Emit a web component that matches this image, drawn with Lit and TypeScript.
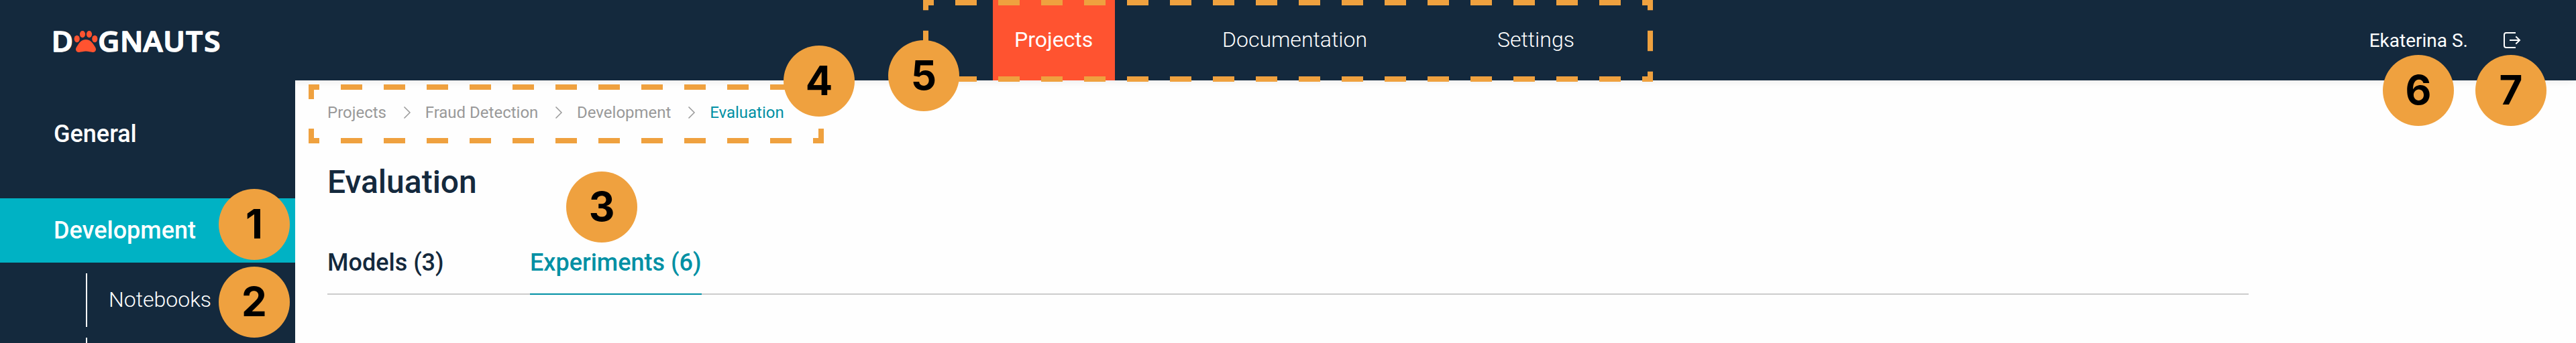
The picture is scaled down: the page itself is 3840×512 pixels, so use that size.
import { LitElement, html, css, svg } from "lit";
import { customElement, property } from "lit/decorators.js";

@customElement("dash-frame")
class DashFrame extends LitElement {
  @property({ type: Number }) w = 0;
  @property({ type: Number }) h = 0;
  @property({ type: Number }) vdash = 32;

  static styles = css`
    :host { display: block; }
    svg { display: block; }
  `;

  render() {
    const { w, h, vdash } = this;
    const side = (x1: number, y1: number, x2: number, y2: number, dash: number) => svg`
      <line x1=${x1} y1=${y1} x2=${x2} y2=${y2} stroke="#efa13f" stroke-width="8"
        stroke-dasharray="${dash} ${dash}" stroke-dashoffset=${dash / 2} />`;
    return html`<svg width=${w} height=${h} viewBox="0 0 ${w} ${h}">
      ${side(0, 4, w, 4, 32)} ${side(0, h - 4, w, h - 4, 32)}
      ${side(4, 0, 4, h, vdash)} ${side(w - 4, 0, w - 4, h, vdash)}
    </svg>`;
  }
}

@customElement("brand-logo")
class BrandLogo extends LitElement {
  static styles = css`
    :host { display: block; }
    svg { display: block; overflow: visible; }
    .word {
      font: 600 41.8px "Open Sans", "Noto Sans", sans-serif;
      fill: #fff;
      stroke: #fff;
      stroke-width: 1.6px;
      stroke-linejoin: round;
    }
    .paw { fill: #ff5330; }
  `;

  render() {
    return html`<svg width="250" height="32" viewBox="0 0 250 32">
      <text class="word" transform="scale(1.05 1)" x="-3.1 63.2 94.4 127.2 155.4 187.8 213.6" y="31">DGNAUTS</text>
      <g class="paw">
        <ellipse cx="34.7" cy="12" rx="4.1" ry="5.3" />
        <ellipse cx="43" cy="5.1" rx="4.1" ry="5.1" />
        <ellipse cx="53" cy="5.1" rx="4.1" ry="5.1" />
        <ellipse cx="61.3" cy="12" rx="4.1" ry="5.3" />
        <path d="M48 13C54 13 57.2 17 59.8 21C61.3 23.3 63.2 25.6 63 28C62.7 31.1 60.4 32.2 58 32C55 31.8 52 30.6 48 30.6C44 30.6 41 31.8 38 32C35.6 32.2 33.3 31.1 33 28C32.8 25.6 34.7 23.3 36.2 21C38.8 17 42 13 48 13Z" />
      </g>
    </svg>`;
  }
}

@customElement("app-root")
class AppRoot extends LitElement {
  static styles = css`
    :host {
      display: block;
      position: relative;
      width: 3840px;
      height: 512px;
      overflow: hidden;
      background: #fefefe;
      color: #14293d;
      font-family: Roboto, sans-serif;
    }
    * { box-sizing: border-box; }
    header {
      display: flex;
      align-items: center;
      position: relative;
      height: 120px;
      background: #14293d;
      color: #fff;
      box-shadow: 0 0 12px rgba(0, 0, 0, 0.1);
    }
    .brand { width: 1480px; padding: 4px 0 0 80px; }
    nav { display: flex; gap: 128px; height: 120px; flex: 1; }
    .link {
      padding: 0 32px;
      font-size: 32px;
      font-weight: 300;
      line-height: 118px;
      white-space: nowrap;
    }
    .link.on { min-width: 182px; background: #ff5330; font-weight: 400; }
    .link.wide { min-width: 282px; }
    .user { display: flex; align-items: center; gap: 49px; padding-right: 80px; font-size: 28px; }
    .user svg { display: block; }
    .body { display: flex; height: 392px; }
    aside {
      position: relative;
      width: 440px;
      flex: none;
      padding-top: 32px;
      background: #14293d;
      color: #fff;
    }
    .item { height: 96px; padding-left: 80px; font-size: 36px; font-weight: 500; line-height: 96px; }
    .item.on { margin-top: 48px; background: #00b2c4; }
    .sub {
      height: 80px;
      margin: 16px 0 0 128px;
      padding-left: 32px;
      border-left: 2px solid #fff;
      font-size: 32px;
      font-weight: 300;
      line-height: 78px;
    }
    main { flex: 1; padding: 32px 488px 0 48px; }
    .crumbs { display: flex; align-items: center; height: 32px; color: #999; font-size: 24px; line-height: 32px; }
    .crumbs svg { display: block; margin: 0 21px 0 24.7px; }
    .crumbs .here { color: #0090a4; }
    h1 { margin: 56px 0 0; font-size: 48px; font-weight: 500; line-height: 64px; }
    .tabs {
      display: flex;
      gap: 128px;
      height: 80px;
      margin-top: 56px;
      border-bottom: 2px solid #ccc;
      font-size: 36px;
      font-weight: 500;
      line-height: 64px;
    }
    .tab { min-width: 174px; height: 80px; white-space: nowrap; }
    .tab.on { min-width: 256px; color: #0090a4; border-bottom: 2px solid #0090a4; }
    .overlay { position: absolute; }
    .badge {
      position: absolute;
      width: 106px;
      height: 106px;
      border-radius: 50%;
      background: #efa13f;
      color: #000;
      font: 700 60px/105px Inter, sans-serif;
      text-align: center;
    }
  `;

  private trail = ["Projects", "Fraud Detection", "Development"];

  private badges = [
    [326, 282],
    [326, 398],
    [844, 256],
    [1168, 68],
    [1324, 60],
    [3552, 82],
    [3690, 82],
  ];

  render() {
    return html`
      <header>
        <div class="brand"><brand-logo></brand-logo></div>
        <nav>
          <div class="link on">Projects</div>
          <div class="link wide">Documentation</div>
          <div class="link">Settings</div>
        </nav>
        <div class="user">
          <span>Ekaterina S.</span>
          <svg width="32" height="32" viewBox="0 0 32 32" fill="none" stroke="#fff" stroke-width="2">
            <path d="M22 5H8Q5 5 5 8V24Q5 27 8 27H22" />
            <path d="M13 16H28M22.3 10.5L28 16L22.3 21.5" />
          </svg>
        </div>
      </header>
      <div class="body">
        <aside>
          <div class="item">General</div>
          <div class="item on">Development</div>
          <div class="sub">Notebooks</div>
          <div class="sub"></div>
        </aside>
        <main>
          <div class="crumbs">
            ${this.trail.map(
              (t) => html`<span>${t}</span>
                <svg width="12" height="20" viewBox="0 0 12 20" fill="none" stroke="#999" stroke-width="1.5">
                  <path d="M1.5 1.5L10 10L1.5 18.5" />
                </svg>`
            )}
            <span class="here">Evaluation</span>
          </div>
          <h1>Evaluation</h1>
          <div class="tabs">
            <div class="tab">Models (3)</div>
            <div class="tab on">Experiments (6)</div>
          </div>
        </main>
      </div>
      <dash-frame class="overlay" style="left:460px;top:126px" .w=${768} .h=${88} .vdash=${44}></dash-frame>
      <dash-frame class="overlay" style="left:1376px;top:0px" .w=${1088} .h=${122} .vdash=${30.5}></dash-frame>
      ${this.badges.map(
        ([x, y], i) => html`<div class="badge" style="left:${x}px;top:${y}px">${i + 1}</div>`
      )}
    `;
  }
}
